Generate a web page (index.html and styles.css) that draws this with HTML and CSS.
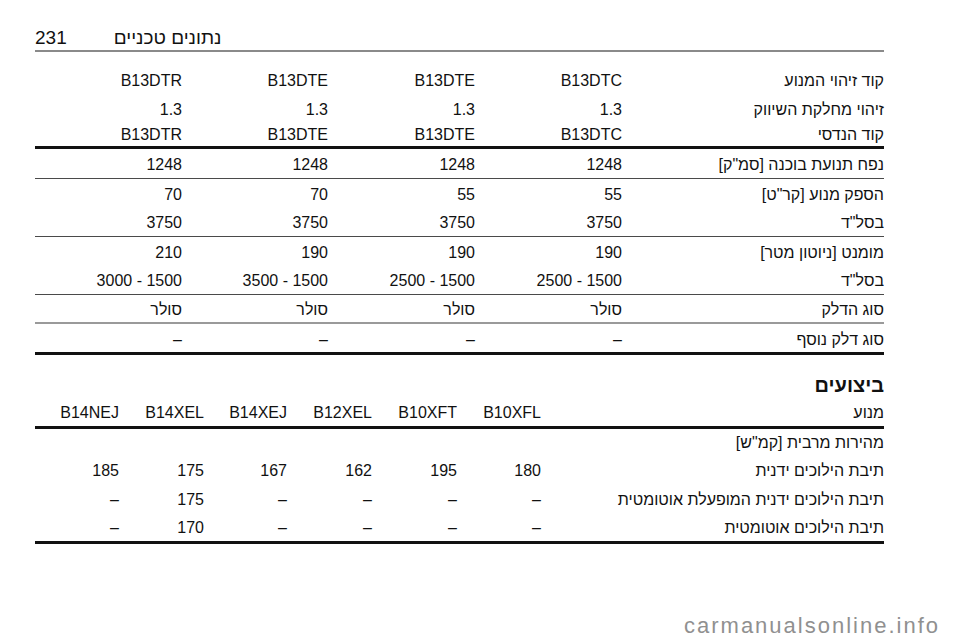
FILE: index.html
```html
<!DOCTYPE html>
<html lang="he" dir="rtl">
<head>
<meta charset="utf-8">
<title>נתונים טכניים 231</title>
<link rel="stylesheet" href="styles.css">
</head>
<body>
<div class="page">
  <header class="page-head">
    <span class="page-num">231</span>
    <span class="page-title">נתונים טכניים</span>
  </header>

  <table class="spec spec-engine">
    <colgroup>
      <col class="c-label1"><col class="c-val1"><col class="c-val1"><col class="c-val1b"><col class="c-val1">
    </colgroup>
    <tbody>
      <tr class="r-top r-top-first"><td>קוד זיהוי המנוע</td><td>B13DTC</td><td>B13DTE</td><td>B13DTE</td><td>B13DTR</td></tr>
      <tr class="r-top"><td>זיהוי מחלקת השיווק</td><td>1.3</td><td>1.3</td><td>1.3</td><td>1.3</td></tr>
      <tr class="r-top r-top-last"><td>קוד הנדסי</td><td>B13DTC</td><td>B13DTE</td><td>B13DTE</td><td>B13DTR</td></tr>
    </tbody>
    <tbody class="grp grp-thick">
      <tr class="r-first"><td>נפח תנועת בוכנה [סמ"ק]</td><td>1248</td><td>1248</td><td>1248</td><td>1248</td></tr>
    </tbody>
    <tbody class="grp">
      <tr><td>הספק מנוע [קר"ט]</td><td>55</td><td>55</td><td>70</td><td>70</td></tr>
      <tr><td>בסל"ד</td><td>3750</td><td>3750</td><td>3750</td><td>3750</td></tr>
    </tbody>
    <tbody class="grp">
      <tr><td>מומנט [ניוטון מטר]</td><td>190</td><td>190</td><td>190</td><td>210</td></tr>
      <tr><td>בסל"ד</td><td>1500 - 2500</td><td>1500 - 2500</td><td>1500 - 3500</td><td>1500 - 3000</td></tr>
    </tbody>
    <tbody class="grp">
      <tr><td>סוג הדלק</td><td>סולר</td><td>סולר</td><td>סולר</td><td>סולר</td></tr>
    </tbody>
    <tbody class="grp grp-light">
      <tr class="r-last"><td>סוג דלק נוסף</td><td>–</td><td>–</td><td>–</td><td>–</td></tr>
    </tbody>
  </table>

  <h2 class="section-title">ביצועים</h2>

  <table class="spec spec-perf">
    <colgroup>
      <col class="c-label2"><col class="c-v84"><col class="c-v85"><col class="c-v85"><col class="c-v83"><col class="c-v85"><col class="c-v84">
    </colgroup>
    <thead>
      <tr><th>מנוע</th><th>B10XFL</th><th>B10XFT</th><th>B12XEL</th><th>B14XEJ</th><th>B14XEL</th><th>B14NEJ</th></tr>
    </thead>
    <tbody>
      <tr><td>מהירות מרבית [קמ"ש]</td><td></td><td></td><td></td><td></td><td></td><td></td></tr>
      <tr><td>תיבת הילוכים ידנית</td><td>180</td><td>195</td><td>162</td><td>167</td><td>175</td><td>185</td></tr>
      <tr><td>תיבת הילוכים ידנית המופעלת אוטומטית</td><td>–</td><td>–</td><td>–</td><td>–</td><td>175</td><td>–</td></tr>
      <tr class="r-last"><td>תיבת הילוכים אוטומטית</td><td>–</td><td>–</td><td>–</td><td>–</td><td>170</td><td>–</td></tr>
    </tbody>
  </table>
</div>
<div class="watermark">carmanualsonline.info</div>
</body>
</html>
```

FILE: styles.css
```css
html, body {
  margin: 0;
  padding: 0;
  background: #ffffff;
}

body {
  font-family: "Liberation Sans", Arial, "DejaVu Sans", sans-serif;
  font-size: 16px;
  color: #111111;
  width: 960px;
  height: 642px;
  overflow: hidden;
  position: relative;
}

.page {
  width: 849px;
  margin: 0 76px 0 35px;
}

.page-head {
  direction: ltr;
  display: flex;
  align-items: flex-end;
  padding-top: 27px;
  padding-bottom: 2px;
  line-height: 21px;
  font-size: 19px;
  border-bottom: 2px solid #8a8a8a;
}

.page-title {
  margin-left: 47px;
}

.spec {
  width: 849px;
  border-collapse: collapse;
  table-layout: fixed;
}

.spec td,
.spec th {
  padding: 0;
  text-align: right;
  font-weight: normal;
  white-space: nowrap;
  line-height: 18px;
  vertical-align: middle;
}

.spec-engine {
  margin-top: 15px;
}

.spec-engine td {
  padding-top: 4px;
}

.spec-engine tr.r-top-first td {
  padding-top: 0;
}

.c-label1 { width: 262px; }
.c-val1 { width: 147px; }
.c-val1b { width: 146px; }

.spec-engine tr { height: 29px; }
.spec-engine tr.r-top { height: 27px; }
.spec-engine tr.r-top-last { height: 26px; }
.spec-engine tr.r-first { height: 31px; }

.grp {
  border-top: 1px solid #4a4a4a;
}

.grp-thick {
  border-top: 3px solid #111111;
}

.grp-light {
  border-top: 2px solid #9a9a9a;
}

.spec-engine tr.r-last {
  height: 30px;
  border-bottom: 3px solid #111111;
}

.section-title {
  margin: 18px 0 0 0;
  font-size: 20px;
  line-height: 24px;
  font-weight: bold;
  text-align: right;
}

.spec-perf {
  margin-top: 4px;
}

.c-label2 { width: 343px; }
.c-v84 { width: 84px; }
.c-v85 { width: 85px; }
.c-v83 { width: 83px; }

.spec-perf thead tr {
  height: 27px;
  border-bottom: 3px solid #111111;
}

.spec-perf tbody tr { height: 29px; }
.spec-perf tbody tr.r-last {
  height: 28px;
  border-bottom: 3px solid #111111;
}

.watermark {
  position: absolute;
  left: 684px;
  top: 613px;
  font-size: 22px;
  line-height: 26px;
  letter-spacing: 2px;
  color: #909090;
  direction: ltr;
}
```
